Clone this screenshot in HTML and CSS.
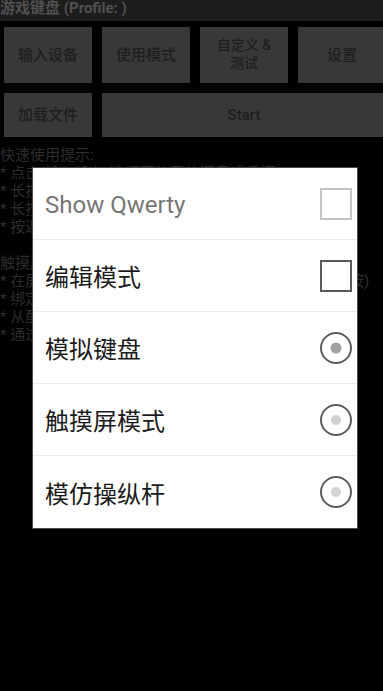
FILE: index.html
```html
<!DOCTYPE html>
<html lang="zh">
<head>
<meta charset="utf-8">
<title>游戏键盘</title>
<link rel="stylesheet" href="styles.css">
</head>
<body>
<div class="screen">
  <div class="titlebar">游戏键盘 (Profile: )</div>
  <div class="buttons">
    <div class="row row1">
      <div class="btn">输入设备</div>
      <div class="btn">使用模式</div>
      <div class="btn two">自定义 &amp;<br>测试</div>
      <div class="btn">设置</div>
    </div>
    <div class="row row2">
      <div class="btn">加载文件</div>
      <div class="btn start">Start</div>
    </div>
  </div>
  <div class="tips">
    <div class="line">快速使用提示:</div>
    <div class="line">* 点击"输入设备"选择要使用的键盘或手柄</div>
    <div class="line">* 长按按钮可以查看更多的功能选项说明</div>
    <div class="line">* 长按屏幕空白区域可以打开设置菜单</div>
    <div class="line">* 按返回键退出当前的使用模式</div>
    <div class="line">&nbsp;</div>
    <div class="line">触摸屏模式:</div>
    <div class="line">* 在屏幕上点击需要绑定按键的位置以设置触摸点 (长按)</div>
    <div class="line">* 绑定完成后点击开始即可使用</div>
    <div class="line">* 从配置文件加载已保存的设置</div>
    <div class="line">* 通过设置菜单调整灵敏度</div>
  </div>

  <div class="dialog">
    <div class="item disabled">
      <span class="label">Show Qwerty</span>
      <span class="check light"></span>
    </div>
    <div class="item">
      <span class="label">编辑模式</span>
      <span class="check"></span>
    </div>
    <div class="item">
      <span class="label">模拟键盘</span>
      <svg class="radio" width="34" height="34" viewBox="0 0 34 34"><circle cx="17" cy="17" r="15" fill="none" stroke="#5e5e5e" stroke-width="2"/><circle cx="17" cy="17" r="5.5" fill="#a2a2a2"/></svg>
    </div>
    <div class="item">
      <span class="label">触摸屏模式</span>
      <svg class="radio" width="34" height="34" viewBox="0 0 34 34"><circle cx="17" cy="17" r="15" fill="none" stroke="#5e5e5e" stroke-width="2"/><circle cx="17" cy="17" r="5" fill="#d0d0d0"/></svg>
    </div>
    <div class="item last">
      <span class="label">模仿操纵杆</span>
      <svg class="radio" width="34" height="34" viewBox="0 0 34 34"><circle cx="17" cy="17" r="15" fill="none" stroke="#5e5e5e" stroke-width="2"/><circle cx="17" cy="17" r="5" fill="#d4d4d4"/></svg>
    </div>
  </div>
</div>
</body>
</html>
```
FILE: styles.css
```css
html, body {
  margin: 0;
  padding: 0;
  background: #000;
}
body {
  width: 383px;
  height: 691px;
  overflow: hidden;
  font-family: Roboto, "Noto Sans CJK SC", sans-serif;
}
.screen {
  position: relative;
  width: 383px;
  height: 691px;
  overflow: hidden;
  background: #000;
}
.titlebar {
  height: 21px;
  background: #1d1d1d;
  color: #505050;
  font-size: 15px;
  font-weight: bold;
  line-height: 17px;
  white-space: nowrap;
}
.buttons {
  padding: 6px 0 0 4px;
  display: flex;
  flex-direction: column;
  gap: 10px;
}
.row {
  display: grid;
  grid-template-columns: 88px 88px 88px 88px;
  column-gap: 10px;
}
.row1 { height: 56px; }
.row2 { height: 44px; grid-template-columns: 88px 284px; }
.btn {
  background: #383838;
  color: #1e1e1e;
  font-size: 15px;
  display: flex;
  align-items: center;
  justify-content: center;
  text-align: center;
  line-height: 17px;
  font-weight: 500;
}
.btn.two { font-size: 14px; line-height: 18px; padding-bottom: 2px; }
.btn.start { font-size: 15px; }
.tips {
  margin-top: 9px;
  color: #2c2c2c;
  font-size: 15px;
  line-height: 18px;
  white-space: nowrap;
}
.line { height: 18px; }
.dialog {
  position: absolute;
  left: 33px;
  top: 168px;
  width: 324px;
  background: #fff;
  box-shadow: 0 0 0 1px #4a4a4a;
}
.item {
  height: 71px;
  border-bottom: 1px solid #ececec;
  display: flex;
  align-items: center;
  justify-content: space-between;
  padding: 0 4px 0 12px;
}
.item.last {
  height: 72px;
  border-bottom: none;
}
.label {
  font-size: 24px;
  color: #1b1b1b;
}
.disabled .label { color: #767676; padding-top: 3px; }
.check {
  width: 28px;
  height: 28px;
  border: 2px solid #5a5a5a;
  margin-right: 1px;
}
.check.light { border-color: #c4c4c4; }
.radio { display: block; }
```
